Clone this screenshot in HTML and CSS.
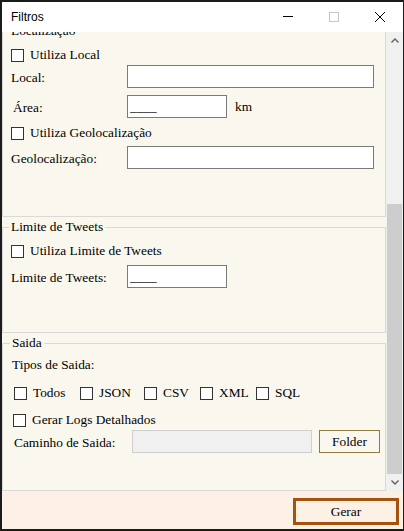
FILE: index.html
```html
<!DOCTYPE html>
<html lang="pt">
<head>
<meta charset="utf-8">
<title>Filtros</title>
<link rel="stylesheet" href="styles.css">
</head>
<body>
<div class="window">
  <header class="titlebar">
    <span class="title">Filtros</span>
    <div class="caption">
      <span class="cap-btn"><svg width="10" height="10" viewBox="0 0 10 10"><rect x="0" y="4" width="10" height="1" fill="#000"/></svg></span>
      <span class="cap-btn"><svg width="10" height="10" viewBox="0 0 10 10"><rect x="0.5" y="0.5" width="9" height="9" fill="none" stroke="#c6c6c6"/></svg></span>
      <span class="cap-btn"><svg width="10" height="10" viewBox="0 0 10 10"><path d="M0 0L10 10M10 0L0 10" stroke="#000" stroke-width="1"/></svg></span>
    </div>
  </header>
  <div class="main">
    <div class="content">
      <fieldset class="group g-local">
        <legend>Localização</legend>
        <label class="check-row m8"><input type="checkbox" class="cb">Utiliza Local</label>
        <div class="field-row m2"><span class="lbl">Local:</span><input class="txt txt-wide" type="text"></div>
        <div class="field-row m7"><span class="lbl lbl-area">Área:</span><input class="txt txt-short" type="text" value="____"><span class="unit">km</span></div>
        <label class="check-row m7"><input type="checkbox" class="cb">Utiliza Geolocalização</label>
        <div class="field-row m5"><span class="lbl">Geolocalização:</span><input class="txt txt-wide" type="text"></div>
      </fieldset>
      <fieldset class="group g-limite">
        <legend>Limite de Tweets</legend>
        <label class="check-row m8"><input type="checkbox" class="cb">Utiliza Limite de Tweets</label>
        <div class="field-row m6"><span class="lbl">Limite de Tweets:</span><input class="txt txt-short" type="text" value="____"></div>
      </fieldset>
      <fieldset class="group g-saida">
        <legend>Saida</legend>
        <div class="plain-row m6">Tipos de Saida:</div>
        <div class="types m12">
          <label class="check-row"><input type="checkbox" class="cb">Todos</label>
          <label class="check-row"><input type="checkbox" class="cb">JSON</label>
          <label class="check-row"><input type="checkbox" class="cb">CSV</label>
          <label class="check-row"><input type="checkbox" class="cb">XML</label>
          <label class="check-row"><input type="checkbox" class="cb">SQL</label>
        </div>
        <label class="check-row logs m11"><input type="checkbox" class="cb">Gerar Logs Detalhados</label>
        <div class="field-row path-row m2"><span class="lbl">Caminho de Saida:</span><input class="txt txt-path" type="text" disabled><button class="btn-folder" type="button">Folder</button></div>
      </fieldset>
    </div>
    <div class="scrollbar">
      <div class="sb-arrow"><svg width="8" height="5" viewBox="0 0 8 5"><path d="M0.5 4.5L4 1L7.5 4.5" fill="none" stroke="#606060" stroke-width="1.4"/></svg></div>
      <div class="sb-track"><div class="sb-thumb"></div></div>
      <div class="sb-arrow"><svg width="8" height="5" viewBox="0 0 8 5"><path d="M0.5 0.5L4 4L7.5 0.5" fill="none" stroke="#606060" stroke-width="1.4"/></svg></div>
    </div>
  </div>
  <footer class="footer">
    <button class="btn-gerar" type="button">Gerar</button>
  </footer>
</div>
</body>
</html>
```
FILE: styles.css
```css
* { box-sizing: border-box; }
html, body { margin: 0; padding: 0; }
body {
  width: 404px;
  height: 531px;
  overflow: hidden;
  background: #1b1b1b;
  font-family: "Liberation Serif", "Times New Roman", serif;
  font-size: 13.333px;
  color: #000;
}
.window {
  height: 531px;
  display: flex;
  flex-direction: column;
  padding: 2px 1px 2px 2px;
}
.titlebar {
  height: 30px;
  flex: none;
  background: #fff;
  display: flex;
  align-items: center;
  padding-left: 9px;
}
.title {
  flex: 1;
  font-family: "Liberation Sans", Arial, sans-serif;
  font-size: 12px;
}
.caption { display: flex; height: 100%; }
.cap-btn {
  width: 46px;
  display: flex;
  align-items: center;
  justify-content: center;
}
.main { display: flex; height: 459px; flex: none; }
.content {
  width: 384px;
  background: #faf8ee;
  overflow: hidden;
}
.group {
  margin: 0;
  min-width: 0;
  border: 1px solid #d9d9d9;
  padding: 0 0 0 8px;
}
.group legend {
  padding: 0 2px;
  margin-left: -2px;
  line-height: 16px;
}
.g-local { margin-top: -9px; padding-bottom: 47px; }
.g-limite { margin-top: 2px; padding-bottom: 44px; }
.g-saida { margin-top: 2px; padding-left: 9px; padding-bottom: 37px; }
.m2 { margin-top: 2px; }
.m5 { margin-top: 5px; }
.m6 { margin-top: 6px; }
.m7 { margin-top: 7px; }
.m8 { margin-top: 8px; }
.m11 { margin-top: 11px; }
.m12 { margin-top: 12px; }
.check-row {
  display: flex;
  align-items: center;
  gap: 6px;
  height: 16px;
  line-height: 16px;
  white-space: nowrap;
}
.cb {
  appearance: none;
  -webkit-appearance: none;
  width: 13px;
  height: 13px;
  margin: 0;
  border: 1px solid #333;
  background: #fff;
  flex: none;
}
.field-row {
  display: flex;
  align-items: center;
  height: 23px;
}
.lbl {
  width: 116px;
  flex: none;
  line-height: 16px;
  padding-top: 2px;
}
.lbl-area { padding-left: 2px; }
.txt {
  height: 23px;
  border: 1px solid #7a7a7a;
  background: #fff;
  padding: 0 2px;
  margin: 0;
  font: inherit;
  color: #000;
  outline: none;
}
.txt-wide { width: 247px; }
.txt-short { width: 100px; }
.unit { margin-left: 8px; line-height: 16px; }
.plain-row { line-height: 16px; }
.types {
  display: grid;
  grid-template-columns: 66px 64px 56px 56px auto;
  padding-left: 2px;
}
.logs { margin-left: 1px; }
.path-row { padding-left: 2px; }
.path-row .lbl { width: 118px; }
.txt-path {
  width: 180px;
  background: #f0f0f0;
  border-color: #cfcfcf;
}
.btn-folder {
  margin: 0 0 0 7px;
  width: 61px;
  height: 23px;
  border: 1px solid #8e7b3e;
  background: #faf8ee;
  font: inherit;
  color: #000;
  padding: 0;
}
.scrollbar {
  width: 17px;
  background: #f0f0f0;
  display: flex;
  flex-direction: column;
}
.sb-arrow {
  height: 17px;
  flex: none;
  display: flex;
  align-items: center;
  justify-content: center;
}
.sb-track {
  flex: 1;
  display: flex;
  flex-direction: column;
  justify-content: flex-end;
}
.sb-thumb {
  height: 270px;
  margin: 0 1px 0 1px;
  background: #cdcdcd;
}
.footer {
  height: 38px;
  flex: none;
  background: #fdf1e6;
  display: flex;
  justify-content: flex-end;
  align-items: flex-start;
  padding: 7px 4px 0 0;
}
.btn-gerar {
  width: 106px;
  height: 27px;
  border: 3px solid #a5520f;
  background: #fdf1e6;
  font: inherit;
  color: #000;
  padding: 0;
  margin: 0;
}
```
